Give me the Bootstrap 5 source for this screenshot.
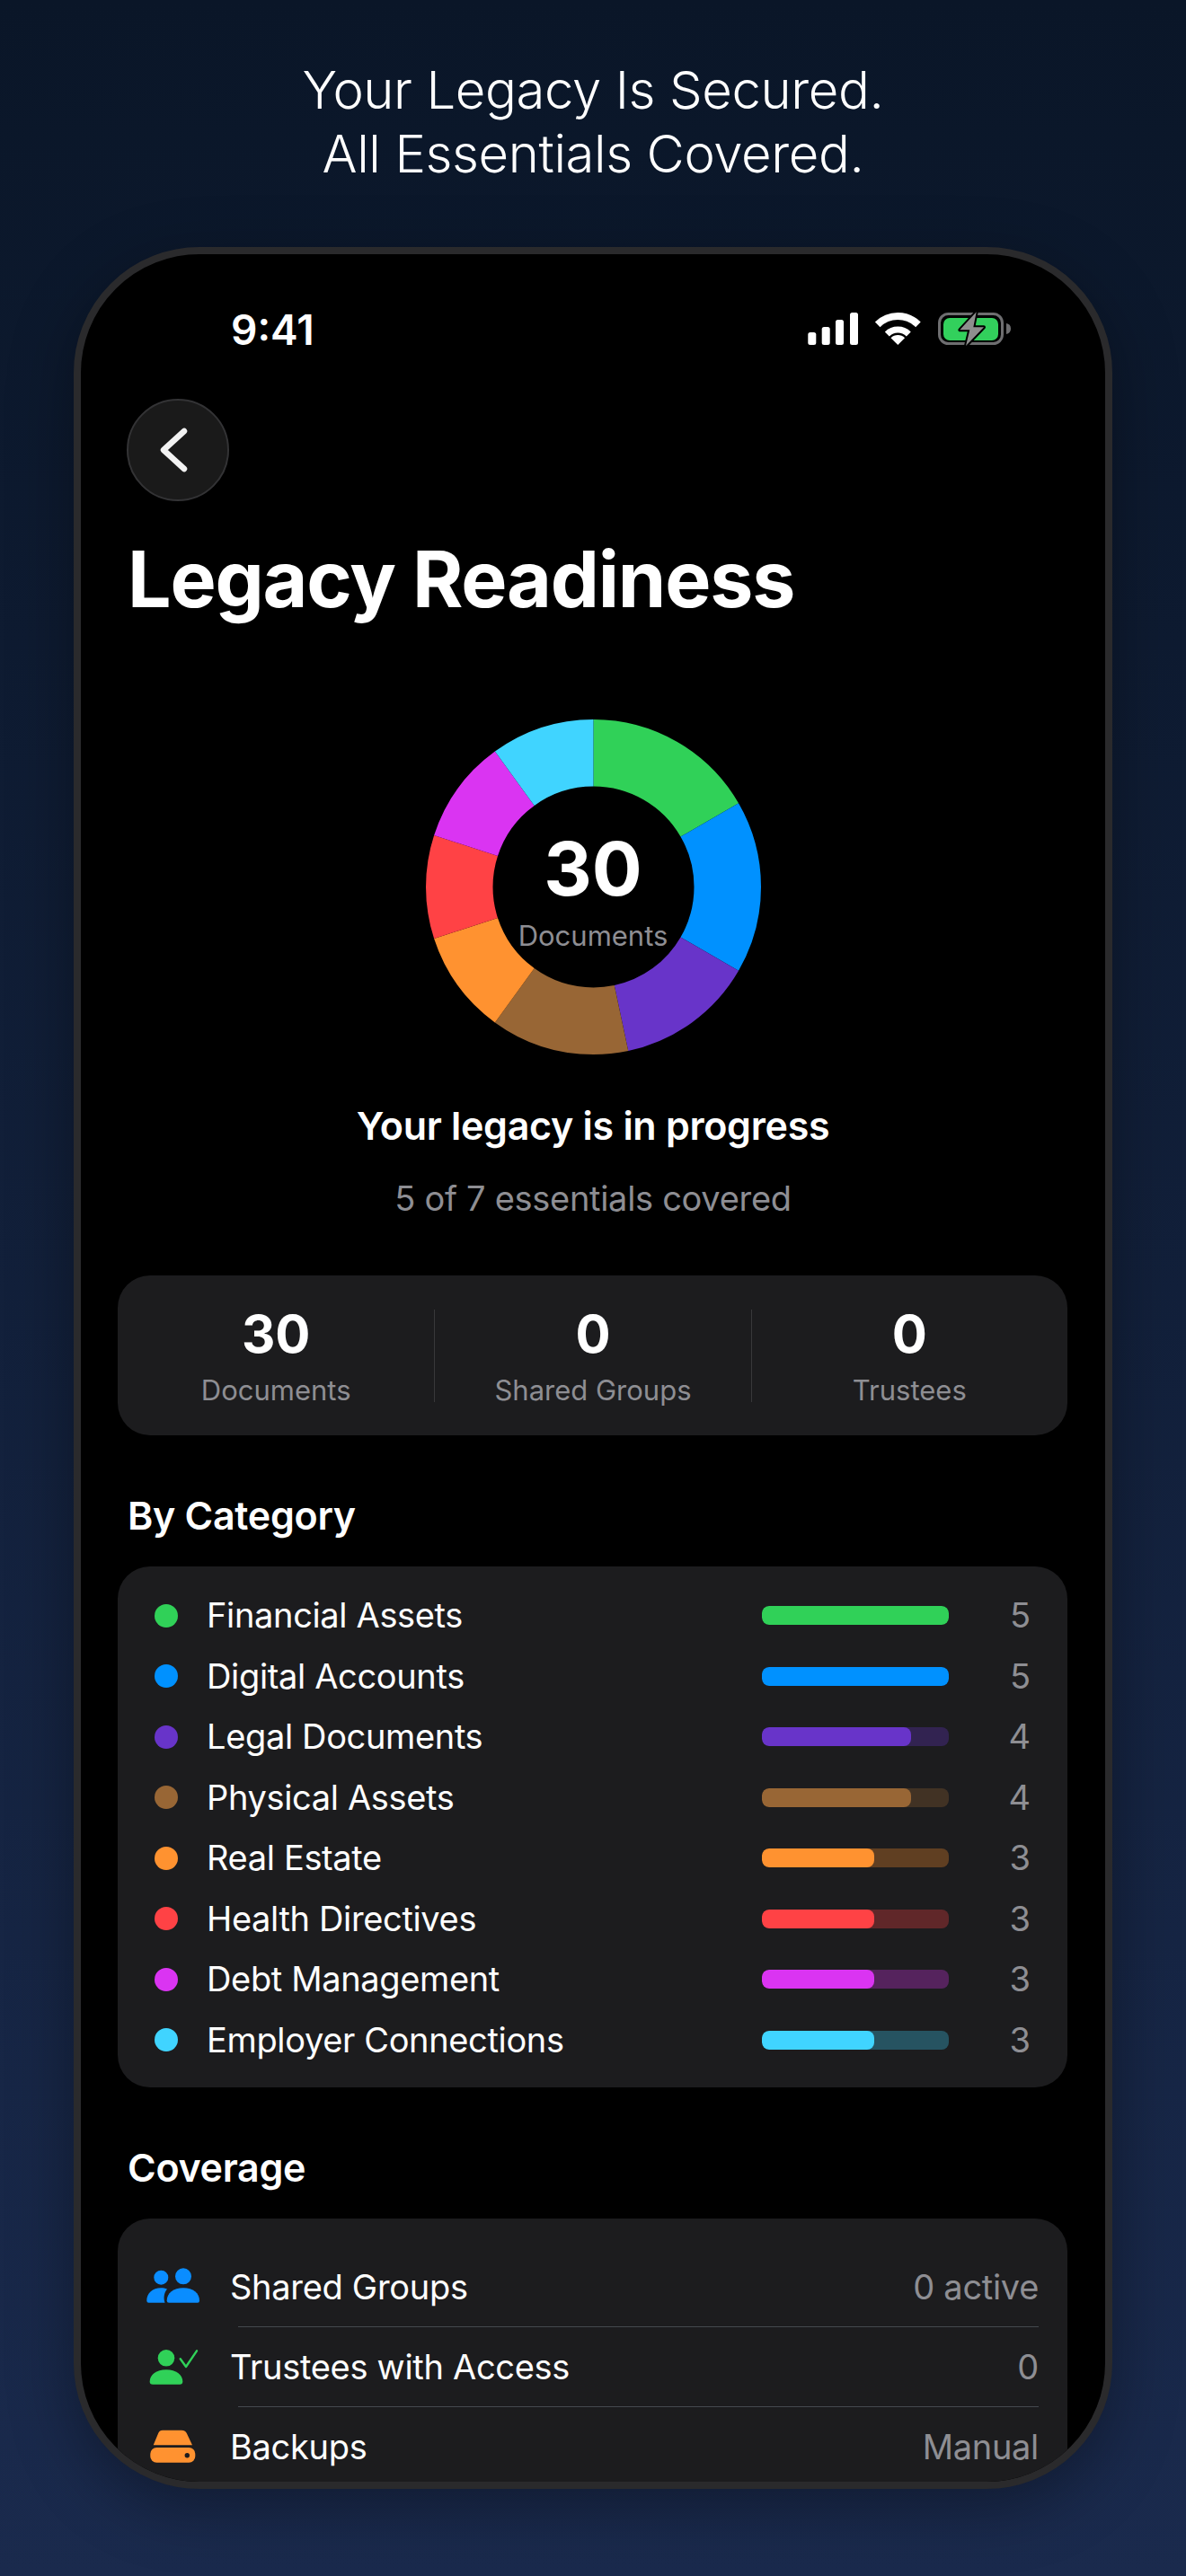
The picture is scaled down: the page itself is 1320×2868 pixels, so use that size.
<!DOCTYPE html>
<html lang="en">

<head>
    <meta charset="UTF-8">
    <meta name="viewport" content="width=device-width, initial-scale=1.0">
    <title>Legacy Readiness</title>
    <link href="https://cdn.jsdelivr.net/npm/bootstrap@5.3.0/dist/css/bootstrap.min.css" rel="stylesheet">
    <style>
        html, body { height: 2868px; overflow: hidden; }
        body {
            background: linear-gradient(180deg, #0a1628 0%, #1a2a4d 100%);
            font-family: Inter, "Liberation Sans", sans-serif;
            color: #fff;
        }
        .tagline { padding-top: 65px; font-size: 58px; line-height: 71px; font-weight: 300; letter-spacing: -.4px; }
        .phone {
            margin: 68px 0 0 82px; width: 1156px; height: 2496px;
            background: #000; border: 8px solid #2a2a2c; border-radius: 140px;
            overflow: hidden; box-shadow: 0 20px 70px rgba(0, 0, 0, .35);
        }
        .status { margin-top: 62px; height: 45px; padding: 0 105px 0 167px; }
        .clock { font-size: 46px; font-weight: 600; line-height: 45px; }
        .back-btn {
            margin: 54px 0 0 51px; width: 114px; height: 114px;
            background: #1a1a1a; border: 2px solid #333335;
        }
        .page-title { margin: 37px 0 0 52px; font-size: 86px; font-weight: 700; line-height: 100px; letter-spacing: -1.2px; }
        .donut { width: 373px; height: 373px; margin: 106px auto 0; }
        .donut svg { display: block; transform: rotate(-90deg); }
        .donut-mid { padding-top: 8px; }
        .donut-num { font-size: 83px; font-weight: 700; line-height: 90px; }
        .donut-lbl { margin-top: 10px; font-size: 31px; line-height: 40px; color: #8e8e93; }
        .headline { margin-top: 51px; font-size: 43px; font-weight: 600; line-height: 56px; letter-spacing: -.3px; }
        .subline { margin-top: 29px; font-size: 38px; line-height: 48px; letter-spacing: -.3px; color: #8e8e93; }
        .tile { margin: 0 42px 0 41px; background: #1c1c1e; border-radius: 36px; }
        .stats { margin-top: 62px; height: 178px; padding-top: 38px; }
        .stat { height: 103px; }
        .stat + .stat { border-left: 1px solid #38383a; }
        .stat-num { margin-top: -4px; font-size: 58px; font-weight: 700; line-height: 62px; }
        .stat-lbl { margin-top: 12px; font-size: 31px; line-height: 40px; color: #8e8e93; }
        .group-title { margin: 61px 0 0 52px; font-size: 43px; font-weight: 600; line-height: 56px; letter-spacing: -.3px; }
        .cats { margin-top: 29px; height: 580px; padding: 21px 0 0 41px; }
        .cat-row { height: 67.5px; padding-right: 41px; }
        .cat-dot { width: 26px; height: 26px; background: var(--tone); }
        .cat-name { margin-left: 32px; font-size: 38px; letter-spacing: -.35px; flex: 1; }
        .cat-row .progress {
            width: 208px; height: 21px; border-radius: 8px;
            background: color-mix(in srgb, var(--tone) 30%, transparent);
        }
        .cat-row .progress-bar { background: var(--tone); border-radius: 8px; }
        .cat-num { width: 91px; text-align: right; font-size: 38px; color: #8e8e93; }
        .tone-green { --tone: #30d158; }
        .tone-blue { --tone: #0091ff; }
        .tone-purple { --tone: #6834c9; }
        .tone-brown { --tone: #986635; }
        .tone-orange { --tone: #ff9230; }
        .tone-red { --tone: #ff4245; }
        .tone-magenta { --tone: #da34f2; }
        .tone-cyan { --tone: #40d4ff; }
        .cover { margin-top: 29px; height: 400px; padding-top: 32px; }
        .cover .list-group-item {
            background: transparent; border: 0; color: #fff; padding: 0 32px 0 26px;
            height: 88px; font-size: 38px; letter-spacing: -.3px;
        }
        .cover-icon { flex: none; width: 70px; height: 50px; margin-right: 29px; }
        .cover-val { color: #8e8e93; }
        .row-line { height: 1px; margin: 0 32px 0 134px; }
    </style>
</head>

<body>
    <div class="tagline text-center">Your Legacy Is Secured.<br>All Essentials Covered.</div>

    <div class="phone">
        <!-- Status bar -->
        <div class="status d-flex justify-content-between">
            <span class="clock">9:41</span>
            <svg width="230" height="45" viewBox="0 0 230 45">
                <g fill="#fff">
                    <rect x="4.3" y="25" width="9" height="14" rx="2.5"/>
                    <rect x="19.7" y="19" width="9" height="20" rx="2.5"/>
                    <rect x="35" y="11" width="9" height="28" rx="2.5"/>
                    <rect x="51" y="3" width="9" height="36" rx="2.5"/>
                    <path d="M104.3 39 96.5 31.2A11 11 0 0 1 112.1 31.2Z"/>
                </g>
                <g fill="none" stroke="#fff">
                    <path d="M81.7 16.4A32 32 0 0 1 126.9 16.4" stroke-width="8"/>
                    <path d="M92.3 27A17 17 0 0 1 116.3 27" stroke-width="7"/>
                </g>
                <rect x="150.5" y="4.5" width="70" height="33" rx="10" fill="none" stroke="#6e6e70" stroke-width="3"/>
                <rect x="155" y="9" width="61" height="25" rx="7" fill="#32d05c"/>
                <path d="M225 15a6 6 0 0 1 5 6a6 6 0 0 1-5 6Z" fill="#6e6e70"/>
                <path d="M191.7 2.3 173.3 22.3H184.3L180 40 200 19.3H188.3Z" fill="#8e8e8e" stroke="#000" stroke-width="4" paint-order="stroke" stroke-linejoin="round"/>
            </svg>
        </div>

        <div class="back-btn rounded-circle d-flex align-items-center justify-content-center">
            <svg width="40" height="60" viewBox="0 0 40 60">
                <path d="M27 9 4 30 27 51" fill="none" stroke="#f2f2f2" stroke-width="6.5" stroke-linecap="round" stroke-linejoin="round"/>
            </svg>
        </div>

        <h1 class="page-title">Legacy Readiness</h1>

        <!-- Donut, 30 documents split over 360 -->
        <div class="donut position-relative">
            <svg width="373" height="373" viewBox="0 0 373 373" fill="none" stroke-width="74.5">
                <circle cx="186.5" cy="186.5" r="149.25" pathLength="360" stroke="#30d158" stroke-dasharray="60 300" stroke-dashoffset="0"/>
                <circle cx="186.5" cy="186.5" r="149.25" pathLength="360" stroke="#0091ff" stroke-dasharray="60 300" stroke-dashoffset="-60"/>
                <circle cx="186.5" cy="186.5" r="149.25" pathLength="360" stroke="#6834c9" stroke-dasharray="48 312" stroke-dashoffset="-120"/>
                <circle cx="186.5" cy="186.5" r="149.25" pathLength="360" stroke="#986635" stroke-dasharray="48 312" stroke-dashoffset="-168"/>
                <circle cx="186.5" cy="186.5" r="149.25" pathLength="360" stroke="#ff9230" stroke-dasharray="36 324" stroke-dashoffset="-216"/>
                <circle cx="186.5" cy="186.5" r="149.25" pathLength="360" stroke="#ff4245" stroke-dasharray="36 324" stroke-dashoffset="-252"/>
                <circle cx="186.5" cy="186.5" r="149.25" pathLength="360" stroke="#da34f2" stroke-dasharray="36 324" stroke-dashoffset="-288"/>
                <circle cx="186.5" cy="186.5" r="149.25" pathLength="360" stroke="#40d4ff" stroke-dasharray="36 324" stroke-dashoffset="-324"/>
            </svg>
            <div class="donut-mid position-absolute top-50 start-50 translate-middle text-center">
                <div class="donut-num">30</div>
                <div class="donut-lbl">Documents</div>
            </div>
        </div>

        <div class="headline text-center">Your legacy is in progress</div>
        <div class="subline text-center">5 of 7 essentials covered</div>

        <!-- Totals -->
        <div class="tile stats">
            <div class="row g-0 text-center">
                <div class="col-4 stat"><div class="stat-num">30</div><div class="stat-lbl">Documents</div></div>
                <div class="col-4 stat"><div class="stat-num">0</div><div class="stat-lbl">Shared Groups</div></div>
                <div class="col-4 stat"><div class="stat-num">0</div><div class="stat-lbl">Trustees</div></div>
            </div>
        </div>

        <div class="group-title">By Category</div>
        <div class="tile cats">
            <div class="cat-row d-flex align-items-center tone-green">
                <span class="cat-dot rounded-circle"></span><span class="cat-name">Financial Assets</span>
                <div class="progress"><div class="progress-bar" style="width: 100%"></div></div><span class="cat-num">5</span>
            </div>
            <div class="cat-row d-flex align-items-center tone-blue">
                <span class="cat-dot rounded-circle"></span><span class="cat-name">Digital Accounts</span>
                <div class="progress"><div class="progress-bar" style="width: 100%"></div></div><span class="cat-num">5</span>
            </div>
            <div class="cat-row d-flex align-items-center tone-purple">
                <span class="cat-dot rounded-circle"></span><span class="cat-name">Legal Documents</span>
                <div class="progress"><div class="progress-bar" style="width: 80%"></div></div><span class="cat-num">4</span>
            </div>
            <div class="cat-row d-flex align-items-center tone-brown">
                <span class="cat-dot rounded-circle"></span><span class="cat-name">Physical Assets</span>
                <div class="progress"><div class="progress-bar" style="width: 80%"></div></div><span class="cat-num">4</span>
            </div>
            <div class="cat-row d-flex align-items-center tone-orange">
                <span class="cat-dot rounded-circle"></span><span class="cat-name">Real Estate</span>
                <div class="progress"><div class="progress-bar" style="width: 60%"></div></div><span class="cat-num">3</span>
            </div>
            <div class="cat-row d-flex align-items-center tone-red">
                <span class="cat-dot rounded-circle"></span><span class="cat-name">Health Directives</span>
                <div class="progress"><div class="progress-bar" style="width: 60%"></div></div><span class="cat-num">3</span>
            </div>
            <div class="cat-row d-flex align-items-center tone-magenta">
                <span class="cat-dot rounded-circle"></span><span class="cat-name">Debt Management</span>
                <div class="progress"><div class="progress-bar" style="width: 60%"></div></div><span class="cat-num">3</span>
            </div>
            <div class="cat-row d-flex align-items-center tone-cyan">
                <span class="cat-dot rounded-circle"></span><span class="cat-name">Employer Connections</span>
                <div class="progress"><div class="progress-bar" style="width: 60%"></div></div><span class="cat-num">3</span>
            </div>
        </div>

        <div class="group-title">Coverage</div>
        <div class="tile cover">
            <div class="list-group list-group-flush">
                <div class="list-group-item d-flex align-items-center">
                    <svg class="cover-icon" viewBox="0 0 70 50" fill="#0a8dff">
                        <circle cx="22.3" cy="14.7" r="8"/>
                        <circle cx="47" cy="13.3" r="9"/>
                        <path d="M28.7 40.5C28.7 32 36 26.3 47 26.3S65 32 65 40.5Q65 42.7 63 42.7H31Q28.7 42.7 28.7 40.5Z"/>
                        <path d="M6.3 40.5C6.3 32 13 26.3 22 26.3 24.5 26.3 27 26.8 29 27.6 26 31 24.5 37 26.5 42.7H8.5Q6.3 42.7 6.3 40.5Z"/>
                    </svg>
                    <span class="flex-grow-1">Shared Groups</span><span class="cover-val">0 active</span>
                </div>
                <div class="row-line border-top border-secondary border-opacity-50"></div>
                <div class="list-group-item d-flex align-items-center">
                    <svg class="cover-icon" viewBox="0 0 70 50" fill="#30d158">
                        <circle cx="28" cy="15.3" r="9.3"/>
                        <path d="M9.7 41.5C9.7 34 17 28.3 28 28.3S46.3 34 46.3 41.5Q46.3 44.7 43 44.7H13Q9.7 44.7 9.7 41.5Z"/>
                        <path d="M43.7 16.3 50 25 62 7.3" fill="none" stroke="#30d158" stroke-width="2.4" stroke-linecap="round" stroke-linejoin="round"/>
                    </svg>
                    <span class="flex-grow-1">Trustees with Access</span><span class="cover-val">0</span>
                </div>
                <div class="row-line border-top border-secondary border-opacity-50"></div>
                <div class="list-group-item d-flex align-items-center">
                    <svg class="cover-icon" viewBox="0 0 70 50" fill="#ff9230">
                        <path d="M24 6.7H45Q49.7 6.7 51 10.5L57 23.3H13.7L19 10.5Q20 6.7 24 6.7Z"/>
                        <rect x="10.3" y="26" width="50" height="16.7" rx="7"/>
                        <circle cx="51.3" cy="34.7" r="2.7" fill="#1c1c1e"/>
                    </svg>
                    <span class="flex-grow-1">Backups</span><span class="cover-val">Manual</span>
                </div>
            </div>
        </div>
    </div>

    <script src="https://cdn.jsdelivr.net/npm/bootstrap@5.3.0/dist/js/bootstrap.bundle.min.js"></script>
</body>

</html>
